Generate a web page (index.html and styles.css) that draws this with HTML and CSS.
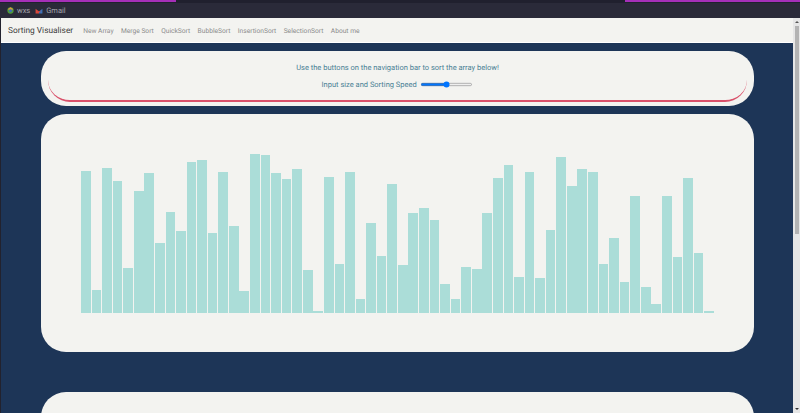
FILE: index.html
```html
<!DOCTYPE html>
<html lang="en">
  <head>
    <meta charset="UTF-8" />
    <meta name="viewport" content="width=device-width, initial-scale=1.0" />
    <title>Sorting Visualiser</title>
    <link rel="stylesheet" href="styles.css">
  </head>
  <body>
    <div class="tabstrip">
      <div class="tab-line"></div>
      <div class="tab-line-right"></div>
    </div>
    <div class="bookmarks">
      <span class="bookmark">
        <svg width="7" height="7" viewBox="0 0 8 8">
          <circle cx="4" cy="4" r="3.6" fill="#4f9a3a" />
          <path d="M.8 2.500 4 .4 7.200 2.500 4 4z" fill="#d99a3a" />
          <circle cx="4" cy="4.400" r="1.700" fill="#3d6fb5" />
        </svg>
        wxs
      </span>
      <span class="bookmark">
        <svg width="8" height="6" viewBox="0 0 9 7">
          <path d="M.5 6.500V1L4.500 4V6.500z" fill="#d9483b" />
          <path d="M4.500 4 8.500 1V6.500H4.500z" fill="#3d6fb5" />
          <path d="M3 2.800 4.500 4 6 2.800V4.800H3z" fill="#c9453f" />
        </svg>
        Gmail
      </span>
    </div>
    <div class="window">
      <div class="page">
        <nav class="navbar">
          <a class="brand">Sorting Visualiser</a>
          <a class="nav-link">New Array</a>
          <a class="nav-link">Merge Sort</a>
          <a class="nav-link">QuickSort</a>
          <a class="nav-link">BubbleSort</a>
          <a class="nav-link">InsertionSort</a>
          <a class="nav-link">SelectionSort</a>
          <a class="nav-link">About me</a>
        </nav>
        <div class="card card-top">
          <div class="intro">
            <p>Use the buttons on the navigation bar to sort the array below!</p>
            <div class="controls">
              <label for="size">Input size and Sorting Speed</label>
              <input type="range" id="size" min="0" max="100" value="50" />
            </div>
          </div>
        </div>
        <div class="card card-chart">
          <div class="bars">
            <div class="bar" style="height: 142px"></div>
            <div class="bar" style="height: 23px"></div>
            <div class="bar" style="height: 145px"></div>
            <div class="bar" style="height: 132px"></div>
            <div class="bar" style="height: 45px"></div>
            <div class="bar" style="height: 122px"></div>
            <div class="bar" style="height: 140px"></div>
            <div class="bar" style="height: 70px"></div>
            <div class="bar" style="height: 101px"></div>
            <div class="bar" style="height: 82px"></div>
            <div class="bar" style="height: 151px"></div>
            <div class="bar" style="height: 153px"></div>
            <div class="bar" style="height: 80px"></div>
            <div class="bar" style="height: 141px"></div>
            <div class="bar" style="height: 87px"></div>
            <div class="bar" style="height: 22px"></div>
            <div class="bar" style="height: 159px"></div>
            <div class="bar" style="height: 158px"></div>
            <div class="bar" style="height: 140px"></div>
            <div class="bar" style="height: 134px"></div>
            <div class="bar" style="height: 144px"></div>
            <div class="bar" style="height: 43px"></div>
            <div class="bar" style="height: 2px"></div>
            <div class="bar" style="height: 136px"></div>
            <div class="bar" style="height: 49px"></div>
            <div class="bar" style="height: 141px"></div>
            <div class="bar" style="height: 14px"></div>
            <div class="bar" style="height: 90px"></div>
            <div class="bar" style="height: 57px"></div>
            <div class="bar" style="height: 129px"></div>
            <div class="bar" style="height: 48px"></div>
            <div class="bar" style="height: 100px"></div>
            <div class="bar" style="height: 105px"></div>
            <div class="bar" style="height: 93px"></div>
            <div class="bar" style="height: 29px"></div>
            <div class="bar" style="height: 14px"></div>
            <div class="bar" style="height: 46px"></div>
            <div class="bar" style="height: 44px"></div>
            <div class="bar" style="height: 100px"></div>
            <div class="bar" style="height: 135px"></div>
            <div class="bar" style="height: 148px"></div>
            <div class="bar" style="height: 36px"></div>
            <div class="bar" style="height: 141px"></div>
            <div class="bar" style="height: 35px"></div>
            <div class="bar" style="height: 83px"></div>
            <div class="bar" style="height: 156px"></div>
            <div class="bar" style="height: 127px"></div>
            <div class="bar" style="height: 144px"></div>
            <div class="bar" style="height: 141px"></div>
            <div class="bar" style="height: 49px"></div>
            <div class="bar" style="height: 75px"></div>
            <div class="bar" style="height: 31px"></div>
            <div class="bar" style="height: 117px"></div>
            <div class="bar" style="height: 26px"></div>
            <div class="bar" style="height: 9px"></div>
            <div class="bar" style="height: 117px"></div>
            <div class="bar" style="height: 56px"></div>
            <div class="bar" style="height: 135px"></div>
            <div class="bar" style="height: 60px"></div>
            <div class="bar" style="height: 2px"></div>
          </div>
        </div>
        <div class="card card-next"></div>
      </div>
      <div class="scrollbar">
        <div class="arrow-up"></div>
        <div class="thumb"></div>
        <div class="arrow-down"></div>
      </div>
    </div>
  </body>
</html>
```

FILE: styles.css
```css
html,
body {
  height: 100%;
  margin: 0;
  overflow: hidden;
}
body {
  display: flex;
  flex-direction: column;
  font-family: Roboto, "Liberation Sans", sans-serif;
  text-rendering: geometricPrecision;
  background: #1d3557;
}
.tabstrip {
  display: flex;
  justify-content: space-between;
  height: 3px;
  background: #20202e;
}
.tab-line {
  width: 176px;
  height: 2px;
  background: #a52fb8;
}
.tab-line-right {
  width: 175px;
  height: 2px;
  background: #a52fb8;
}
.bookmarks {
  display: flex;
  align-items: center;
  gap: 5px;
  height: 15px;
  padding-left: 7px;
  background: #2a2a39;
  color: #a3a3ab;
  font-size: 7.500px;
}
.bookmark {
  display: flex;
  align-items: center;
  gap: 3px;
}
.window {
  display: flex;
  flex: 1;
  min-height: 0;
  border-left: 1px solid #22222e;
}
.page {
  flex: 1;
  min-width: 0;
  overflow: hidden;
}
.navbar {
  display: flex;
  align-items: center;
  height: 23px;
  padding: 1px 0 0 7px;
  background: #f3f3f0;
  border-bottom: 1px solid #fff;
}
.brand {
  margin-right: 10px;
  color: #3c3c3c;
  font-size: 8.330px;
}
.nav-link {
  margin-right: 7.400px;
  color: #8c8c8c;
  font-size: 6.670px;
}
.card {
  margin: 0 39px 8px 40px;
  background: #f3f3f0;
  border-radius: 25px;
}
.card-top {
  height: 55px;
  margin-top: 8px;
  padding: 0 7px;
}
.intro {
  box-sizing: border-box;
  height: 51px;
  padding-top: 12px;
  border-bottom: 2px solid #d9506a;
  border-radius: 22px;
  color: #4a8195;
  font-size: 7.500px;
  text-align: center;
}
.intro p {
  margin: 0 0 8px;
}
.controls {
  display: flex;
  justify-content: center;
  align-items: center;
  gap: 3px;
}
.controls input {
  margin: 0;
  zoom: 0.4167;
}
.card-chart {
  display: flex;
  align-items: flex-end;
  height: 238px;
  padding: 0 40px 39px;
  box-sizing: border-box;
}
.bars {
  display: flex;
  align-items: flex-end;
  gap: 0.850px;
  width: 633px;
}
.bar {
  flex: 1;
  background: #abddd8;
}
.card-next {
  height: 60px;
  margin-top: 40px;
}
.scrollbar {
  display: flex;
  flex-direction: column;
  align-items: center;
  width: 7px;
  background: #e6e6e6;
}
.arrow-up {
  width: 0;
  height: 0;
  margin: 3px 0;
  border: 2px solid transparent;
  border-top: 0;
  border-bottom-color: #555;
}
.thumb {
  width: 4px;
  height: 208px;
  background: #b3b3b3;
}
.arrow-down {
  width: 0;
  height: 0;
  margin: auto 0 3px;
  border: 2px solid transparent;
  border-bottom: 0;
  border-top-color: #333;
}
```
